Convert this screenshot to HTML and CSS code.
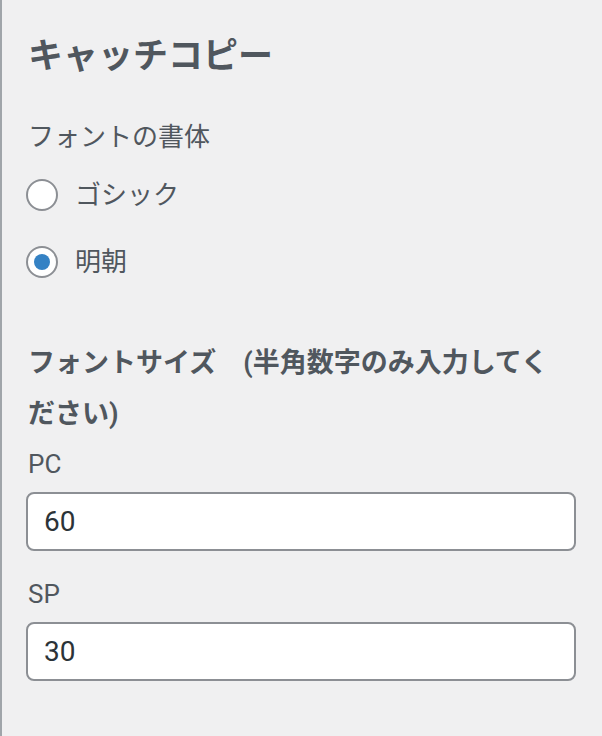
FILE: index.html
```html
<!doctype html>
<html lang="ja">
  <head>
    <meta charset="utf-8">
    <title>キャッチコピー</title>
    <link rel="stylesheet" href="styles.css">
  </head>
  <body>
    <div class="panel">
      <h2 class="section-title">キャッチコピー</h2>

      <!-- Font face choice. -->
      <div class="control">
        <span class="control-description">フォントの書体</span>
        <label class="radio-row">
          <input type="radio" name="catch-font" value="gothic">
          <span>ゴシック</span>
        </label>
        <label class="radio-row">
          <input type="radio" name="catch-font" value="mincho" checked>
          <span>明朝</span>
        </label>
      </div>

      <!-- Font sizes. -->
      <div class="control control-size">
        <span class="control-title">フォントサイズ　(半角数字のみ入力してください)</span>
        <label class="field">
          <span class="field-label">PC</span>
          <input type="text" class="field-input" value="60">
        </label>
        <label class="field">
          <span class="field-label">SP</span>
          <input type="text" class="field-input" value="30">
        </label>
      </div>
    </div>
  </body>
</html>
```

FILE: styles.css
```css
* { margin: 0; padding: 0; box-sizing: border-box; }
html, body {
  width: 100%;
  height: 100%;
  background: #f0f0f1;
  font-family: Roboto, "Noto Sans CJK JP", sans-serif;
  color: #50575e;
}
body {
  border-left: 2px solid #a0a5aa;
}
.panel {
  padding: 35px 26px 0 24px;
}
.section-title {
  font-size: 35px;
  line-height: 44px;
  font-weight: 700;
  color: #50575e;
  padding-left: 2px;
}
.control {
  display: flex;
  flex-direction: column;
}
.control-description {
  margin-top: 40px;
  font-size: 26px;
  line-height: 36px;
  padding-left: 2px;
}
.radio-row {
  display: flex;
  align-items: center;
  gap: 17px;
  margin-top: 22px;
  font-size: 26px;
  line-height: 36px;
  cursor: pointer;
}
.radio-row + .radio-row { margin-top: 31px; }
.radio-row input {
  appearance: none;
  -webkit-appearance: none;
  width: 32px;
  height: 32px;
  border: 2px solid #8c8f94;
  border-radius: 50%;
  background: #fff;
  display: grid;
  place-items: center;
  margin: 0;
}
.radio-row input:checked::before {
  content: "";
  width: 16px;
  height: 16px;
  border-radius: 50%;
  background: #3582c4;
}
.control-size {
  margin-top: 58px;
}
.control-title {
  font-size: 27px;
  line-height: 51px;
  font-weight: 700;
  padding: 0 12px 0 2px;
}
.field {
  display: flex;
  flex-direction: column;
}
.field + .field { margin-top: 25px; }
.field-label {
  margin-top: 6px;
  font-size: 26px;
  line-height: 36px;
  padding-left: 2px;
}
.field + .field .field-label { margin-top: 0; }
.field-input {
  margin-top: 10px;
  height: 59px;
  width: 100%;
  border: 2px solid #8c8f94;
  border-radius: 8px;
  background: #fff;
  padding: 0 16px;
  font-family: Roboto, "Noto Sans CJK JP", sans-serif;
  font-size: 28px;
  color: #2c3338;
  outline: none;
}
```
